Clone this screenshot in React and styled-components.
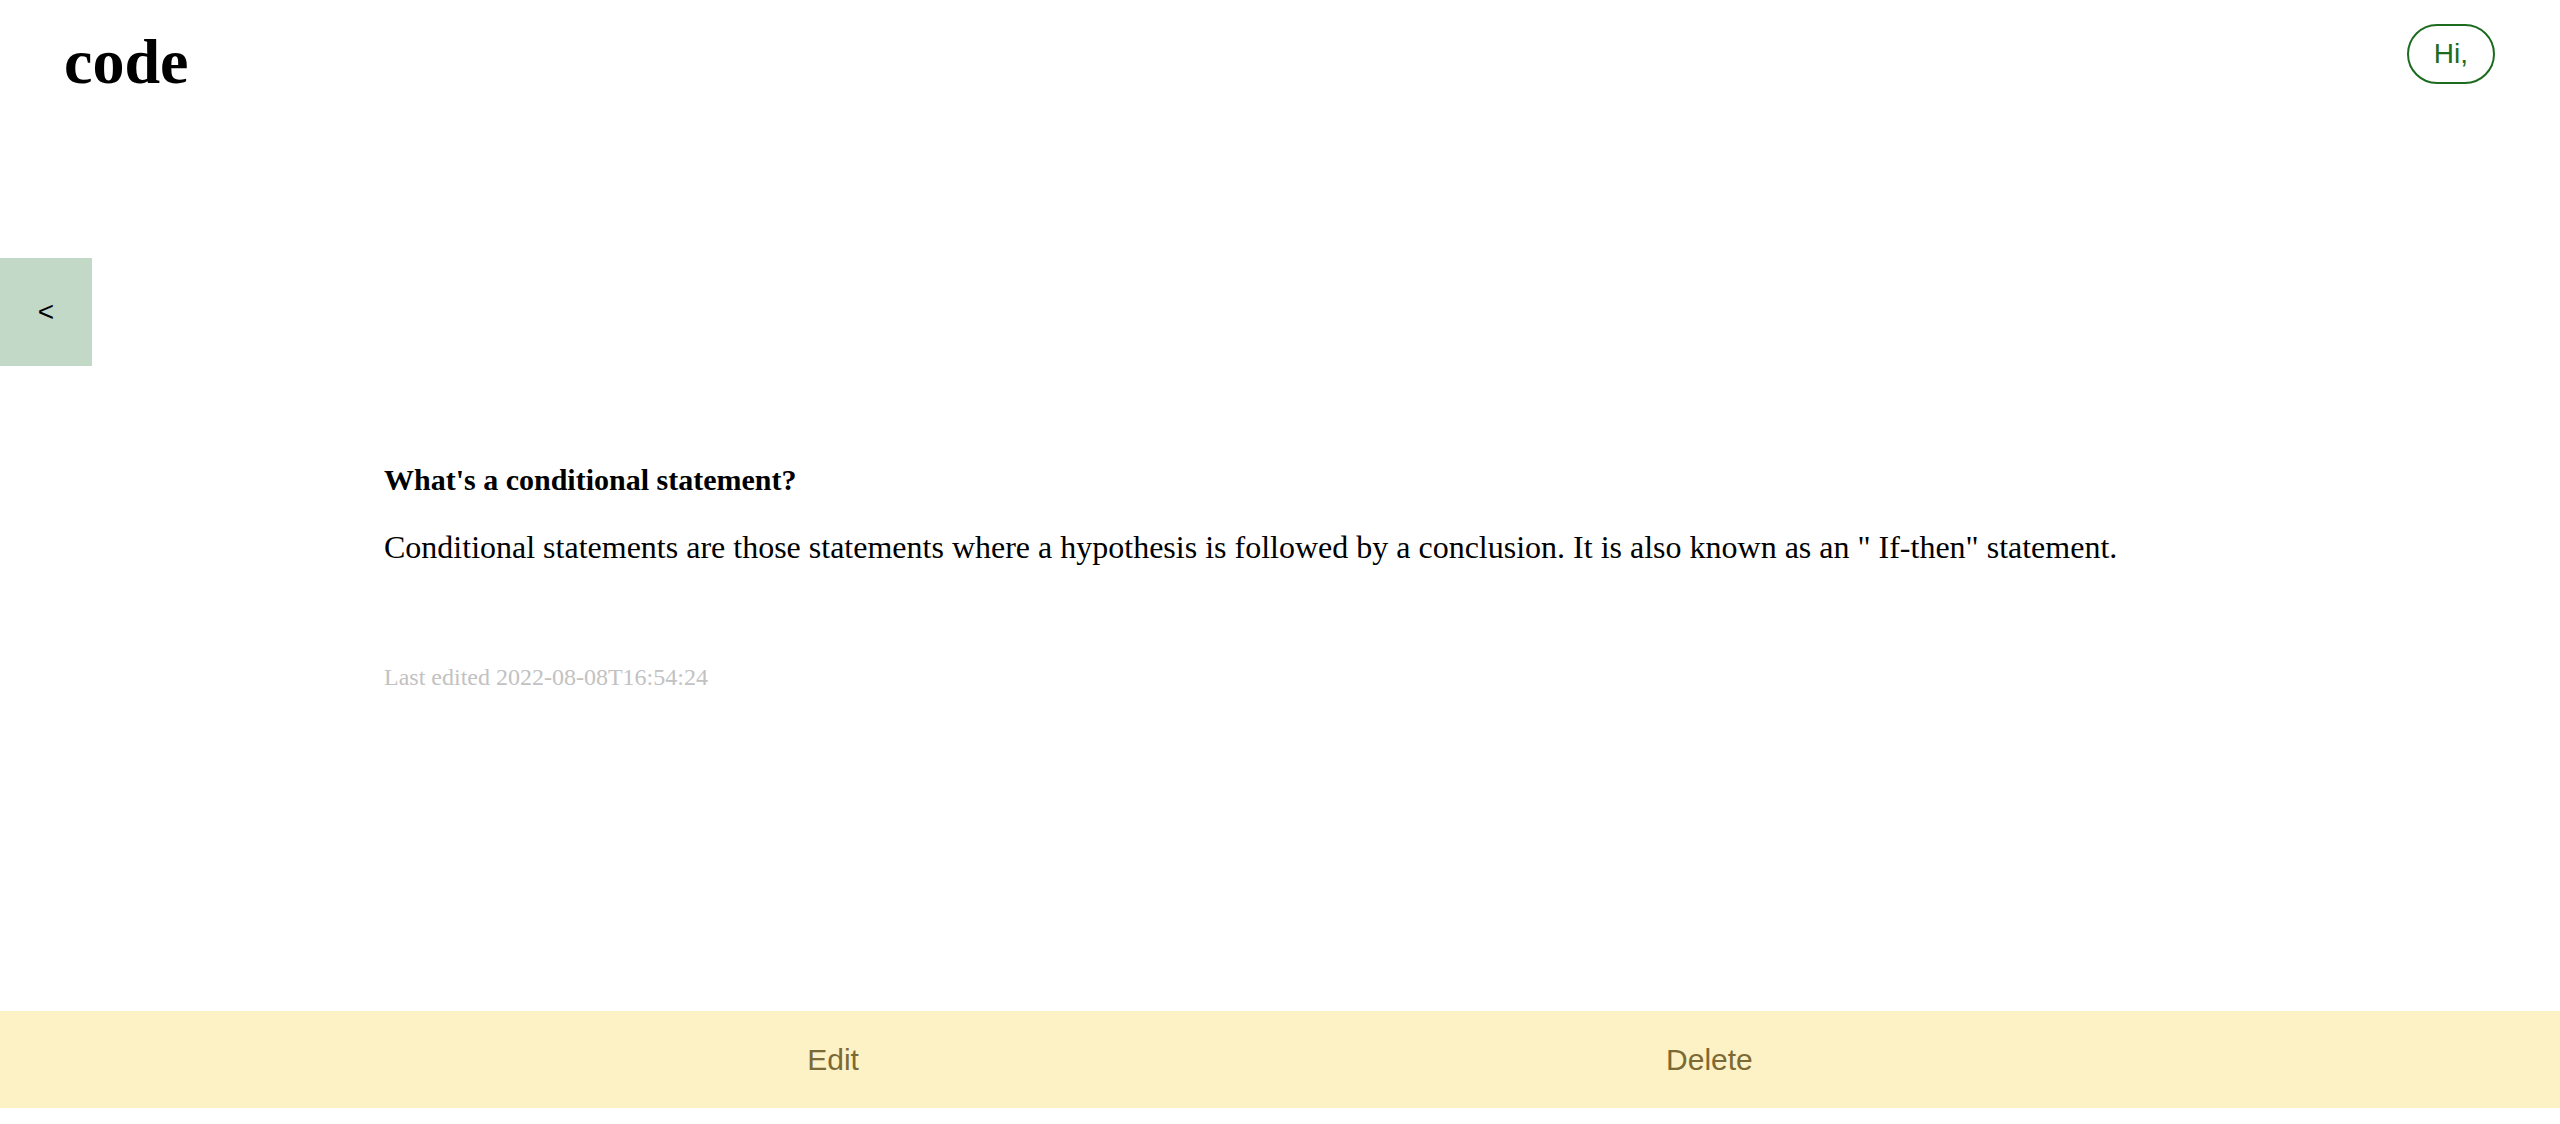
import React from 'react'
import styled, { createGlobalStyle } from 'styled-components'

const GlobalStyle = createGlobalStyle`
  html, body {
    margin: 0;
    padding: 0;
    background: #ffffff;
  }
  body {
    font-family: "Liberation Serif", "Times New Roman", serif;
    color: #000000;
  }
`

const Page = styled.div`
  min-height: 100vh;
  display: flex;
  flex-direction: column;
`

const Header = styled.header`
  display: flex;
  justify-content: space-between;
  align-items: flex-start;
  padding: 24px 65px 0 64px;
`

const Logo = styled.h1`
  margin: 1px 0 0;
  font-family: "Liberation Serif", serif;
  font-weight: 700;
  font-size: 64px;
  line-height: normal;
`

const Greeting = styled.button`
  font-family: "Liberation Sans", Arial, sans-serif;
  font-size: 28px;
  line-height: normal;
  color: #1c6b1f;
  background: transparent;
  border: 2px solid #1c6b1f;
  border-radius: 30px;
  padding: 12px 25px;
  cursor: pointer;
`

const BackButton = styled.button`
  width: 92px;
  height: 108px;
  margin-top: 159px;
  border: none;
  background: #c3d9c8;
  font-family: "Liberation Sans", Arial, sans-serif;
  font-size: 28px;
  color: #000000;
  cursor: pointer;
  display: flex;
  align-items: center;
  justify-content: center;
`

const Card = styled.main`
  width: 70%;
  margin: 97px auto 0;
`

const Question = styled.h2`
  margin: 0;
  font-size: 30px;
  font-weight: 700;
  line-height: normal;
`

const Answer = styled.p`
  margin: 32px 0 0;
  font-size: 32px;
  line-height: normal;
`

const Meta = styled.p`
  margin: 98px 0 0;
  font-size: 24px;
  line-height: normal;
  color: #c2c2c2;
`

const ActionBar = styled.footer`
  margin-top: auto;
  margin-bottom: 16px;
  height: 97px;
  background: #fdf2c6;
  display: flex;
  align-items: center;
  justify-content: space-evenly;
`

const ActionButton = styled.button`
  background: transparent;
  border: none;
  padding: 0;
  font-family: "Liberation Sans", Arial, sans-serif;
  font-size: 30px;
  color: #7b6a35;
  cursor: pointer;
`

const note = {
  question: "What's a conditional statement?",
  answer: 'Conditional statements are those statements where a hypothesis is followed by a conclusion. It is also known as an " If-then" statement.',
  updated: '2022-08-08T16:54:24',
}

const App = () => (
  <Page>
    <GlobalStyle />
    <Header>
      <Logo>code</Logo>
      <Greeting>Hi,</Greeting>
    </Header>
    <div>
      <BackButton>&lt;</BackButton>
    </div>
    <Card>
      <Question>{note.question}</Question>
      <Answer>{note.answer}</Answer>
      <Meta>Last edited {note.updated}</Meta>
    </Card>
    <ActionBar>
      <ActionButton>Edit</ActionButton>
      <ActionButton>Delete</ActionButton>
    </ActionBar>
  </Page>
)

export default App
